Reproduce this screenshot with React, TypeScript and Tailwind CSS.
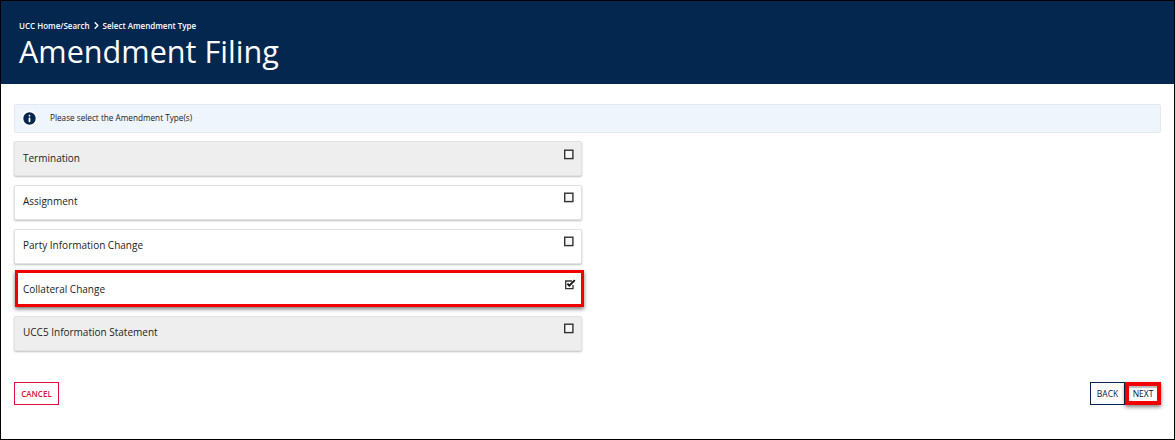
import { ChevronRight, Info } from "lucide-react";

const cards = [
  { label: "Termination", grey: true },
  { label: "Assignment" },
  { label: "Party Information Change" },
  { label: "Collateral Change", checked: true },
  { label: "UCC5 Information Statement", grey: true },
];

function Box({ checked }: { checked?: boolean }) {
  return (
    <svg viewBox="0 0 12 11" className="mt-[6px] h-[11px] w-[12px] text-[#333]">
      {checked ? (
        <>
          <path d="M8 2H1.7V9.6H9V6" fill="none" stroke="currentColor" strokeWidth="1.3" />
          <path d="M3.4 4.6L5.3 6.7L10.8 1.2" fill="none" stroke="#111" strokeWidth="1.8" />
        </>
      ) : (
        <rect x="1.7" y="1.2" width="8.2" height="8.4" fill="#f7f7f7" stroke="currentColor" strokeWidth="1.4" />
      )}
    </svg>
  );
}

function Card({ label, grey, checked }: { label: string; grey?: boolean; checked?: boolean }) {
  if (checked) {
    return (
      <div className="-mt-[3px] ml-px flex h-[37px] w-[569px] justify-between border-[3px] border-[#f00000] bg-white pr-[5px] pl-[5px] shadow-[0_2px_4px_rgba(0,0,0,0.55)]">
        <span className="mt-[7px] text-[10px] leading-[18px] text-[#1c1c1c]">{label}</span>
        <Box checked />
      </div>
    );
  }
  return (
    <div
      className={`flex h-[35px] w-[568px] justify-between rounded-[2px] border border-[#e2e2e2] pr-[6px] pl-2 shadow-[0_1px_2px_rgba(0,0,0,0.25)] first:pt-px ${
        grey ? "bg-[#eeeeee]" : "bg-white"
      }`}
    >
      <span className="mt-[6px] text-[10px] leading-[18px] text-[#1c1c1c]">{label}</span>
      <Box />
    </div>
  );
}

export default function App() {
  return (
    <div className="flex h-[440px] w-[1175px] flex-col border border-black bg-white font-['Open_Sans',sans-serif]">
      <header className="h-[83px] bg-[#03274f] pt-[19px] pl-[18px] text-white">
        <div className="flex items-center text-[8px] leading-[10px] font-semibold">
          UCC Home/Search
          <ChevronRight className="mx-px h-[11px] w-[11px]" strokeWidth={3} />
          Select Amendment Type
        </div>
        <h1 className="mt-[5px] text-[30.6px] leading-[30px]">Amendment Filing</h1>
      </header>

      <main className="flex flex-1 flex-col px-[13px] pt-[20px]">
        <div className="flex h-[29px] items-center rounded-[2px] border border-[#e4e9f0] bg-[#eff5fc] pl-[6px] text-[8.2px] text-[#222]">
          <Info className="h-[17px] w-[17px] fill-[#03274f] text-white" strokeWidth={2.5} />
          <span className="ml-[12px]">Please select the Amendment Type(s)</span>
        </div>

        <div className="mt-[8px] flex flex-col gap-[9px]">
          {cards.map((c) => (
            <Card key={c.label} {...c} />
          ))}
        </div>

        <div className="mt-[31px] flex items-start justify-between">
          <button className="h-[23px] w-[45px] border border-[#e0103a] text-[8px] font-semibold text-[#e0103a]">
            CANCEL
          </button>
          <div className="flex">
            <button className="h-[23px] w-[35px] border border-[#03274f] pt-px text-[8.5px] font-medium text-[#0a2240]">
              BACK
            </button>
            <button className="h-[23px] w-[36px] border-4 border-[#f00000] pt-px text-[8.5px] font-medium text-[#03152e] shadow-[0_2px_4px_rgba(0,0,0,0.5),inset_0_2px_1px_#bbbbbb]">
              NEXT
            </button>
          </div>
        </div>
      </main>
    </div>
  );
}
